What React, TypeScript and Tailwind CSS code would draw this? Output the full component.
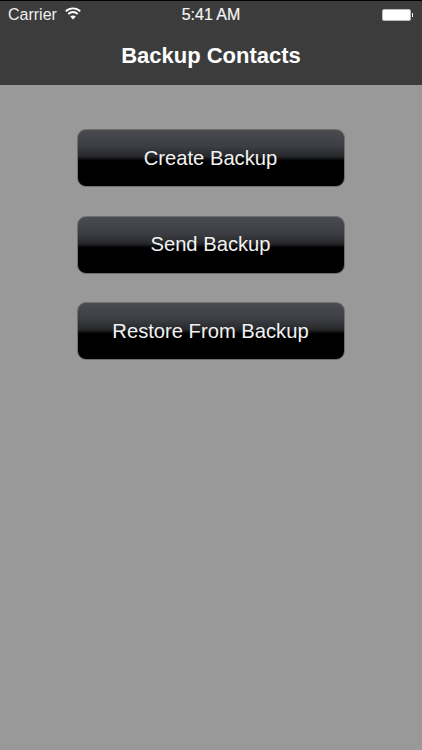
import React from 'react';

const actions = ['Create Backup', 'Send Backup', 'Restore From Backup'];

const WifiIcon = () => (
  <svg width="16" height="13" viewBox="0 0 16 13" fill="none" stroke="#fff" strokeWidth="1.9">
    <path d="M.8 4.4C4.8.4 11.2.4 15.2 4.4" />
    <path d="M3.3 7C6 4.4 10 4.4 12.7 7" />
    <path d="M8 12.4L5.2 9.5C6.8 8 9.2 8 10.8 9.5z" fill="#fff" stroke="none" />
  </svg>
);

export default function App() {
  return (
    <div className="h-[750px] w-[422px] overflow-hidden bg-[#999999] font-['Liberation_Sans',sans-serif] text-white">
      {/* Status + nav bar */}
      <div className="h-[85px] border-t border-black bg-[#3c3c3c]">
        <div className="flex h-[28px] items-center justify-between px-[8px] text-[16px]">
          <div className="flex w-[140px] items-center gap-[8px]">
            <span className="text-[#eeeeee]">Carrier</span>
            <span className="-mt-[4px]">
              <WifiIcon />
            </span>
          </div>
          <span className="text-[#f5f5f5] [-webkit-text-stroke:0.2px_#f5f5f5]">5:41 AM</span>
          <div className="flex w-[140px] justify-end pr-px">
            <div className="flex items-center">
              <div className="h-[12px] w-[29px] rounded-[2px] border border-[#bbbbbb] bg-white" />
              <div className="ml-px h-[4px] w-[1px] bg-white" />
            </div>
          </div>
        </div>
        <div className="mt-[2px] text-center text-[22px] font-bold leading-[50px]">Backup Contacts</div>
      </div>

      {/* Actions */}
      <div className="flex flex-col items-start gap-[28.5px] pl-[77px] pt-[44px]">
        {actions.map((label) => (
          <button
            key={label}
            className="h-[58px] w-[268px] rounded-[9px] border border-[#6f6f6f] bg-[linear-gradient(#4b4c52_0%,#3c3d42_30%,#27282b_47%,#000_55%,#000_100%)] pr-px text-[20.2px] text-[#f2f2f2]"
          >
            {label}
          </button>
        ))}
      </div>
    </div>
  );
}
